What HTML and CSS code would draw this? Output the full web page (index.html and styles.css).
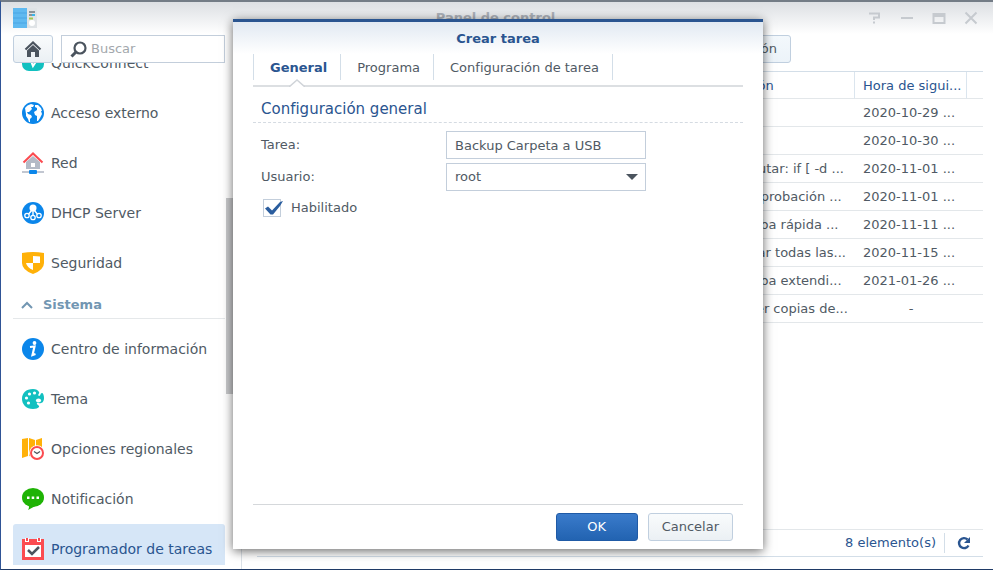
FILE: index.html
```html
<!DOCTYPE html>
<html lang="es">
<head>
  <meta charset="UTF-8">
  <title>Panel de control</title>
  <link rel="stylesheet" href="styles.css">
</head>
<body>
  <div class="window">
    <header class="titlebar">
      <svg class="app-icon" width="24" height="20" viewBox="0 0 24 20">
        <rect width="14" height="20" fill="#5fb9f0"/>
        <path d="M0 5h14M0 10h14M0 15h14" stroke="#4aa5e4"/>
        <rect x="14" width="10" height="20" fill="#dfe3e6"/>
        <path d="M16 4h6M16 7h3" stroke="#8b9297" stroke-width="2"/>
        <path d="M19 7h3" stroke="#3bb5e8" stroke-width="2"/>
        <path d="M16 10.500h4" stroke="#a5c850" stroke-width="2"/>
        <circle cx="19" cy="15" r="3" fill="#fff"/>
      </svg>
      <h1 class="window-title">Panel de control</h1>
      <div class="window-controls">
        <button class="control" aria-label="Ayuda">
          <svg width="14" height="14" viewBox="0 0 14 14"><path d="M1 2.500h10v4H6V9M5 11.500h2" /></svg>
        </button>
        <button class="control" aria-label="Minimizar">
          <svg width="14" height="14" viewBox="0 0 14 14"><path d="M1 7h12" /></svg>
        </button>
        <button class="control" aria-label="Maximizar">
          <svg width="14" height="14" viewBox="0 0 14 14"><path d="M1.500 3h11v9h-11zM2 5h10" /></svg>
        </button>
        <button class="control" aria-label="Cerrar">
          <svg width="14" height="14" viewBox="0 0 14 14"><path d="M1.500 1.500l11 11M12.500 1.500l-11 11" /></svg>
        </button>
      </div>
    </header>

    <div class="content">
      <aside class="sidebar">
        <div class="sidebar-tools">
          <button class="button home" aria-label="Inicio">
            <svg width="18" height="16" viewBox="0 0 18 16">
              <path d="M1.500 8.500L9 1.500l7.500 7" fill="none" stroke="#4b545e" stroke-width="2.200"/>
              <path d="M3 9.500l6-5.500 6 5.500V16h-4v-5H7v5H3z" fill="#4b545e"/>
            </svg>
          </button>
          <label class="search">
            <svg width="17" height="17" viewBox="0 0 17 17" fill="none" stroke="#4b545e">
              <circle cx="10" cy="7" r="5.500" stroke-width="2.200"/>
              <path d="M6 11l-4.500 4.500" stroke-width="3"/>
            </svg>
            <input type="text" placeholder="Buscar" aria-label="Buscar">
          </label>
        </div>

        <nav class="menu">
          <a href="#" class="menu-item first">
            <svg width="22" height="22" viewBox="0 0 22 22">
              <rect y="1" width="22" height="18" rx="7" fill="#12c0c0"/>
              <path d="M6 9h3l2 5 4-6" fill="none" stroke="#fff" stroke-width="2"/>
            </svg>
            <span>QuickConnect</span>
          </a>
          <a href="#" class="menu-item">
            <svg width="22" height="22" viewBox="0 0 22 22">
              <circle cx="11" cy="11" r="11" fill="#0b86ea"/>
              <path d="M3 6q2-3 6-4l3 1-1 2-2 0 1 2-3 3-2 0 1 2 3 1 1 2-2 2v3H7l-1-3-2-3 0-2z" fill="#fff"/>
              <path d="M13 3l3 0 3 3 1 3-1 0 1 3-2 4-2 3h-1l0-5-2-1-1-3 3-2 0-2-2-1z" fill="#fff"/>
            </svg>
            <span>Acceso externo</span>
          </a>
          <a href="#" class="menu-item">
            <svg width="22" height="22" viewBox="0 0 22 22">
              <path d="M4 10l7-6 7 6v7H4z" fill="#b3bac6"/>
              <path d="M1.500 10.500L11 1.500l9.500 9" fill="none" stroke="#fb4b50" stroke-width="2"/>
              <rect x="9" y="11" width="4" height="4" fill="#fff"/>
              <path d="M0 20h22" stroke="#b3bac6" stroke-width="1.600"/>
              <rect x="7" y="18" width="8" height="4" rx="1" fill="#0b86ea"/>
            </svg>
            <span>Red</span>
          </a>
          <a href="#" class="menu-item">
            <svg width="22" height="22" viewBox="0 0 22 22">
              <circle cx="11" cy="11" r="11" fill="#0b86ea"/>
              <path d="M11 7v8M10 8l-5 6M12 8l5 6" stroke="#fff" stroke-width="1.400"/>
              <circle cx="11" cy="6" r="3.500" fill="#fff"/>
              <g fill="#0b86ea" stroke="#fff" stroke-width="1.300">
                <circle cx="5" cy="13.500" r="2.200"/>
                <circle cx="11" cy="15.500" r="2.200"/>
                <circle cx="17" cy="13.500" r="2.200"/>
              </g>
            </svg>
            <span>DHCP Server</span>
          </a>
          <a href="#" class="menu-item">
            <svg width="22" height="22" viewBox="0 0 22 22">
              <path d="M0 1q11-2 22 0v10q0 7-11 11Q0 18 0 11z" fill="#ffb108"/>
              <path d="M11 4q4 0 7 .6V11h-7zM4 11h7v7q-6-2.500-7-7z" fill="#fff"/>
            </svg>
            <span>Seguridad</span>
          </a>

          <h2 class="menu-section">
            <svg width="12" height="8" viewBox="0 0 12 8"><path d="M1 7l5-5 5 5" fill="none" stroke="#7296b2" stroke-width="2"/></svg>
            <span>Sistema</span>
          </h2>

          <a href="#" class="menu-item">
            <svg width="22" height="22" viewBox="0 0 22 22">
              <circle cx="11" cy="11" r="11" fill="#0b86ea"/>
              <circle cx="12.500" cy="5" r="1.900" fill="#fff"/>
              <path d="M8 9l4.500-.5-2 8.500 3-1" fill="none" stroke="#fff" stroke-width="2.200"/>
            </svg>
            <span>Centro de información</span>
          </a>
          <a href="#" class="menu-item">
            <svg width="22" height="22" viewBox="0 0 22 22">
              <path d="M11 1C4 1 0 5 0 11c0 5 4 10 11 10 3 0 5-1 6-2 1-2-3-2-2-4 1-1 2 1 4 0 2 0 3-3 3-5 0-3-1-5-2-5-2 0-1 3-3 3-2-1 1-3 0-4-1-2-3-3-6-3z" fill="#12c0c0"/>
              <g fill="#fff">
                <circle cx="7.500" cy="6" r="1.600"/>
                <circle cx="12.500" cy="5" r="1.600"/>
                <circle cx="4.500" cy="10" r="1.600"/>
                <circle cx="6.500" cy="15" r="1.600"/>
                <ellipse cx="16.500" cy="12.500" rx="2.600" ry="2"/>
              </g>
            </svg>
            <span>Tema</span>
          </a>
          <a href="#" class="menu-item">
            <svg width="22" height="22" viewBox="0 0 22 22">
              <path d="M0 1l6-1v18l-6 2zM7 0l6 2v17l-6-1zM14 2l6-2v14h-6z" fill="#ffb108"/>
              <circle cx="15" cy="15" r="7.800" fill="#fff"/>
              <circle cx="15" cy="15" r="6" fill="#fff" stroke="#fb4b50" stroke-width="2"/>
              <path d="M12 13.500l3 2 3-2" fill="none" stroke="#4b545e" stroke-width="1.300"/>
            </svg>
            <span>Opciones regionales</span>
          </a>
          <a href="#" class="menu-item">
            <svg width="22" height="22" viewBox="0 0 22 22">
              <ellipse cx="11" cy="9.500" rx="11" ry="9.500" fill="#1fb305"/>
              <path d="M6 16h10q-4 3-10 6 2-3 0-6z" fill="#1fb305"/>
              <path d="M5 8.500h2.500v2.500H5zM9.700 8.500h2.500v2.500H9.700zM14.500 8.500h2.500v2.500h-2.500z" fill="#fff"/>
            </svg>
            <span>Notificación</span>
          </a>
          <a href="#" class="menu-item selected">
            <svg width="22" height="22" viewBox="0 0 22 22">
              <rect y="1" width="22" height="21" fill="#fb4b50"/>
              <path d="M3 0h4v4H3zM15 0h4v4h-4zM3 7h16v12H3z" fill="#fff"/>
              <path d="M4 0h2v3H4zM16 0h2v3h-2z" fill="#fb4b50"/>
              <path d="M6 12l4 4 7-7" fill="none" stroke="#4b545e" stroke-width="2.500"/>
            </svg>
            <span>Programador de tareas</span>
          </a>
        </nav>
        <div class="scrollbar"></div>
      </aside>

      <main class="panel">
        <div class="toolbar">
          <button class="button">Crear</button>
          <button class="button">Editar</button>
          <button class="button">Ejecutar</button>
          <button class="button">Configuración</button>
        </div>

        <table class="tasks">
          <colgroup>
            <col>
            <col class="col-action">
            <col class="col-time">
            <col class="col-end">
          </colgroup>
          <thead>
            <tr><th></th><th>Acción</th><th>Hora de sigui...</th><th></th></tr>
          </thead>
          <tbody>
            <tr><td></td><td></td><td>2020-10-29 ...</td><td></td></tr>
            <tr><td></td><td></td><td>2020-10-30 ...</td><td></td></tr>
            <tr><td></td><td>Ejecutar: if [ -d ...</td><td>2020-11-01 ...</td><td></td></tr>
            <tr><td></td><td>Comprobación ...</td><td>2020-11-01 ...</td><td></td></tr>
            <tr><td></td><td>Prueba rápida ...</td><td>2020-11-11 ...</td><td></td></tr>
            <tr><td></td><td>Vaciar todas las...</td><td>2020-11-15 ...</td><td></td></tr>
            <tr><td></td><td>Prueba extendi...</td><td>2021-01-26 ...</td><td></td></tr>
            <tr><td></td><td>Hacer copias de...</td><td class="empty">-</td><td></td></tr>
          </tbody>
        </table>

        <footer class="statusbar">
          <span class="count">8 elemento(s)</span>
          <button class="refresh" aria-label="Actualizar">
            <svg width="14" height="14" viewBox="0 0 14 14">
              <path d="M10.500 3.500A5 5 0 1 0 11.500 9.500" fill="none" stroke="#2a5590" stroke-width="2.400"/>
              <path d="M13 1v6H7z" fill="#2a5590"/>
            </svg>
          </button>
        </footer>
      </main>
    </div>

    <div class="overlay">
      <form class="dialog" role="dialog" aria-labelledby="dialog-title">
        <h2 class="dialog-title" id="dialog-title">Crear tarea</h2>
        <div class="tabs" role="tablist">
          <button type="button" class="tab active" role="tab">General
            <svg class="notch" width="16" height="8" viewBox="0 0 16 8"><path d="M0 8l8-7 8 7" fill="#fff" stroke="#d0d4d9" stroke-width="1.500"/></svg>
          </button>
          <button type="button" class="tab" role="tab">Programa</button>
          <button type="button" class="tab" role="tab">Configuración de tarea</button>
        </div>
        <div class="dialog-body">
          <h3 class="group-title">Configuración general</h3>
          <div class="field">
            <label for="task">Tarea:</label>
            <input type="text" id="task" value="Backup Carpeta a USB">
          </div>
          <div class="field">
            <label for="user">Usuario:</label>
            <div class="select">
              <select id="user"><option>root</option></select>
              <svg width="12" height="6" viewBox="0 0 12 6"><path d="M0 0h12L6 6z" fill="#4b545e"/></svg>
            </div>
          </div>
          <div class="check">
            <input type="checkbox" id="enabled" checked>
            <svg width="20" height="18" viewBox="0 0 20 18"><path d="M2 9.500l3-2 4 4L17 3l3-1-3 5-7 8.500H7.500z" fill="#2a5d9e"/></svg>
            <label for="enabled">Habilitado</label>
          </div>
        </div>
        <div class="dialog-footer">
          <button type="button" class="button primary">OK</button>
          <button type="button" class="button">Cancelar</button>
        </div>
      </form>
    </div>
  </div>
</body>
</html>
```
FILE: styles.css
```css
* {
  box-sizing: border-box;
}

body {
  margin: 0;
  font-family: "DejaVu Sans", Verdana, sans-serif;
  font-size: 13px;
  line-height: 20px;
  color: #505a64;
}

h1, h2, h3 {
  margin: 0;
  font-size: 13px;
}

button, input, select {
  font: inherit;
  color: inherit;
}

svg {
  display: block;
  flex: none;
}

.window {
  position: relative;
  display: flex;
  flex-direction: column;
  height: 100vh;
  border-top: 2px solid #737c86;
  border-left: 1px solid #2f5496;
  border-bottom: 1px solid #1f3a66;
  background: linear-gradient(#dcdfe3, #fff 32px);
  overflow: hidden;
}

/* Title bar */
.titlebar {
  display: grid;
  grid-template-columns: 1fr auto 1fr;
  align-items: center;
  height: 33px;
  padding: 0 15px 2px 12px;
}

.window-title {
  color: #abb0b8;
}

.window-controls {
  display: flex;
  justify-content: flex-end;
  gap: 18px;
}

.control {
  padding: 0;
  border: 0;
  background: none;
}

.control path {
  fill: none;
  stroke: #c6cacf;
  stroke-width: 2;
}

.content {
  display: flex;
  flex: 1;
  min-height: 0;
}

.button {
  height: 28px;
  padding: 0 13px;
  border: 1px solid #c0cfdf;
  border-radius: 3px;
  background: linear-gradient(#f9fbfc, #ebf0f4);
}

/* Sidebar */
.sidebar {
  position: relative;
  display: flex;
  flex-direction: column;
  width: 240px;
  padding: 0 16px 4px 12px;
}

.sidebar-tools {
  display: flex;
  align-items: center;
  gap: 8px;
}

.home {
  display: flex;
  align-items: center;
  justify-content: center;
  width: 40px;
}

.search {
  display: flex;
  flex: 1;
  align-items: center;
  gap: 4px;
  min-width: 0;
  height: 28px;
  padding: 0 8px;
  border: 1px solid #c3cedb;
  background: #fff;
}

.search input {
  flex: 1;
  min-width: 0;
  padding: 0;
  border: 0;
  outline: 0;
  background: none;
}

.search input::placeholder {
  color: #a3a8ad;
}

.menu {
  flex: 1;
  min-height: 0;
  overflow: hidden;
}

.menu-item {
  display: flex;
  align-items: center;
  gap: 7px;
  height: 50px;
  padding: 0 9px;
  border-radius: 3px;
  color: #505a64;
  font-size: 14px;
  text-decoration: none;
  white-space: nowrap;
}

/* the list is scrolled, so the first entry is half hidden */
.menu-item.first {
  margin-top: -25px;
}

.menu-item.selected {
  background: #d6e6f7;
  color: #2a5590;
}

.menu-section {
  display: flex;
  align-items: center;
  gap: 10px;
  height: 31px;
  margin-bottom: 5px;
  padding: 4px 8px 0;
  border-bottom: 1px solid #e5e8ea;
  color: #7296b2;
}

.scrollbar {
  position: absolute;
  top: 163px;
  right: 7px;
  width: 8px;
  height: 196px;
  background: #c8c9cb;
}

/* Task list */
.panel {
  display: flex;
  flex: 1;
  flex-direction: column;
  min-width: 0;
  padding: 0 10px 12px 15px;
  border-left: 1px solid #dce2e8;
}

.toolbar {
  display: flex;
  justify-content: flex-end;
  gap: 6px;
  margin-bottom: 8px;
  padding-right: 192px;
}

.toolbar .button {
  background: linear-gradient(#f3f8fc, #ecf3f9);
}

.tasks {
  width: 100%;
  border-top: 1px solid #d3dee8;
  border-spacing: 0;
  table-layout: fixed;
}

.col-action {
  width: 132px;
}

.col-time {
  width: 112px;
}

.col-end {
  width: 16px;
}

.tasks th,
.tasks td {
  height: 28px;
  padding: 0 0 0 8px;
  border-bottom: 1px solid #e3e7ea;
  text-align: left;
  white-space: nowrap;
  overflow: hidden;
}

.tasks th {
  height: 27px;
  padding-top: 2px;
  border-right: 1px solid #dbe5ee;
  color: #2a5590;
  font-weight: normal;
}

.tasks th:last-child {
  border-right: 0;
}

.tasks .empty {
  padding: 0;
  text-align: center;
}

.statusbar {
  display: flex;
  align-items: center;
  justify-content: flex-end;
  height: 28px;
  margin-top: auto;
  border-top: 1px solid #e3e7ea;
  border-bottom: 1px solid #d3dee8;
  color: #2a5590;
}

.count {
  padding-right: 8px;
  border-right: 1px solid #d3dee8;
}

.refresh {
  padding: 0 12px;
  border: 0;
  background: none;
}

/* Dialog */
.overlay {
  position: absolute;
  inset: 0;
  display: flex;
  align-items: flex-start;
  justify-content: center;
  padding: 17px 0 0 2px;
}

.dialog {
  display: flex;
  flex-direction: column;
  width: 530px;
  height: calc(100vh - 40px);
  padding: 0 20px;
  border-top: 3px solid #2a5590;
  background: linear-gradient(#e1e9f2, #fff 32px);
  box-shadow: 0 2px 10px rgba(0, 0, 0, 0.6);
}

.dialog-title {
  padding: 7px 0 5px;
  color: #2a5590;
  text-align: center;
}

.tabs {
  display: flex;
  padding-bottom: 5px;
  border-bottom: 2px solid #dcdfe2;
}

.tab {
  position: relative;
  height: 26px;
  padding: 2px 13px 0 16px;
  border: 0;
  border-right: 1px solid #d3dee8;
  background: none;
  white-space: nowrap;
}

.tab.active {
  border-left: 1px solid #d3dee8;
  color: #2a5590;
  font-weight: bold;
}

.notch {
  position: absolute;
  bottom: -7px;
  left: calc(50% - 8px);
}

.dialog-body {
  flex: 1;
  padding-top: 12px;
}

.group-title {
  margin-bottom: 8px;
  padding: 0 8px 3px;
  border-bottom: 1px dashed #d5dbe2;
  color: #2a5590;
  font-size: 15px;
  font-weight: normal;
}

.field {
  display: flex;
  align-items: center;
  margin-bottom: 4px;
  padding-left: 8px;
}

.field label {
  width: 185px;
}

.field input,
.field select {
  width: 200px;
  height: 28px;
  padding: 0 8px;
  border: 1px solid #c3cedb;
  border-radius: 0;
  background: #fff;
  appearance: none;
}

.select {
  position: relative;
}

.select svg {
  position: absolute;
  top: 11px;
  right: 8px;
  pointer-events: none;
}

.check {
  position: relative;
  display: flex;
  align-items: center;
  gap: 10px;
  height: 26px;
  padding-left: 10px;
}

.check input {
  width: 18px;
  height: 18px;
  margin: 0;
  border: 1px solid #c3cedb;
  background: #fff;
  appearance: none;
}

.check svg {
  position: absolute;
  left: 10px;
  pointer-events: none;
}

.dialog-footer {
  display: flex;
  justify-content: flex-end;
  gap: 10px;
  padding: 8px 10px;
  border-top: 1px solid #d5d8db;
}

.button.primary {
  width: 82px;
  border-color: #1f5aa6;
  background: linear-gradient(#3a7bcb, #2263b1);
  color: #fff;
}
```
